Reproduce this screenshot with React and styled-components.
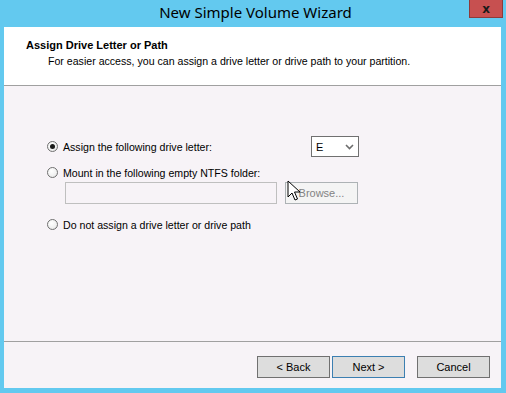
import React, { useState } from 'react'
import styled, { createGlobalStyle } from 'styled-components'

const GlobalStyle = createGlobalStyle`
  html, body { margin: 0; padding: 0; }
  body {
    width: 506px;
    height: 393px;
    overflow: hidden;
    font-family: 'Liberation Sans', Arial, sans-serif;
    font-size: 11px;
    color: #000;
  }
`

const Window = styled.div`
  width: 506px;
  height: 393px;
  box-sizing: border-box;
  background: #63c9ef;
  padding: 0 5px 5px 4px;
  display: flex;
  flex-direction: column;
  position: relative;
`

const TitleBar = styled.div`
  height: 27px;
  display: grid;
  grid-template-columns: 1fr auto 1fr;
  align-items: start;
`

const Title = styled.div`
  grid-column: 2;
  font-family: 'Noto Sans', 'Open Sans', sans-serif;
  font-size: 15px;
  line-height: 24px;
  color: #000;
  padding-left: 6px;
`

const CloseButton = styled.div`
  grid-column: 3;
  justify-self: end;
  margin-right: -2px;
  width: 34px;
  height: 18px;
  box-sizing: border-box;
  background: #c75050;
  border: 1px solid #8e3a3a;
  border-top: none;
  display: flex;
  align-items: center;
  justify-content: center;
  font-family: 'DejaVu Sans', sans-serif;
  font-weight: bold;
  font-size: 12px;
  color: #1a1a1a;
`

const Client = styled.div`
  flex: 1;
  display: flex;
  flex-direction: column;
  background: #f7f3f7;
`

const Header = styled.div`
  height: 59px;
  background: #fff;
  border-bottom: 1px solid #a0a0a0;
  box-sizing: border-box;
  padding: 12px 0 0 22px;
`

const HeaderTitle = styled.div`
  font-weight: bold;
  font-size: 11px;
  line-height: 13px;
`

const HeaderSub = styled.div`
  padding-left: 22px;
  margin-top: 3px;
  font-size: 10.6px;
  line-height: 13px;
`

const Body = styled.div`
  flex: 1;
  padding: 54px 0 0 43px;
  display: flex;
  flex-direction: column;
`

const OptionRow = styled.label`
  display: flex;
  align-items: center;
  height: 13px;
  margin-top: ${p => p.$top || 0}px;
  margin-bottom: ${p => p.$gap || 0}px;
`

const Radio = styled.span`
  width: 11px;
  height: 11px;
  box-sizing: border-box;
  border-radius: 50%;
  border: 1px solid #707070;
  background: radial-gradient(circle at 40% 35%, #ffffff 0%, #f0f0f0 60%, #d8d8d8 100%);
  display: flex;
  align-items: center;
  justify-content: center;
  flex: none;

  &::after {
    content: '';
    width: 5px;
    height: 5px;
    border-radius: 50%;
    background: ${p => (p.$checked ? '#1a1a1a' : 'transparent')};
  }
`

const OptionText = styled.span`
  margin-left: 5px;
  width: ${p => p.$width || 'auto'};
  font-size: 10.6px;
`

const Select = styled.div`
  width: 48px;
  height: 21px;
  box-sizing: border-box;
  border: 1px solid #707070;
  background: #fff;
  display: flex;
  align-items: center;
  justify-content: space-between;
  padding: 0 4px 0 4px;
  font-size: 11px;
`

const PathRow = styled.div`
  display: flex;
  align-items: center;
  gap: 8px;
  margin: 3px 0 0 18px;
`

const PathInput = styled.div`
  width: 212px;
  height: 22px;
  box-sizing: border-box;
  border: 1px solid #bfbfbf;
  background: #f7f3f7;
`

const Button = styled.div`
  width: ${p => p.$w || 73}px;
  height: 22px;
  box-sizing: border-box;
  display: flex;
  align-items: center;
  justify-content: center;
  font-size: 11px;
  background: ${p => (p.$disabled ? '#f4f4f4' : '#dddddd')};
  border: 1px solid ${p => (p.$primary ? '#3c7fb1' : p.$disabled ? '#adb2b5' : '#707070')};
  color: ${p => (p.$disabled ? '#838383' : '#000')};
`

const Footer = styled.div`
  height: 47px;
  box-sizing: border-box;
  border-top: 1px solid #a0a0a0;
  display: flex;
  align-items: flex-start;
  padding: 14px 0 0 253px;
`

const FooterGap = styled.div`
  width: ${p => p.$w}px;
`

const Cursor = styled.svg`
  position: absolute;
  left: 287px;
  top: 180px;
`

const Chevron = () => (
  <svg width="9" height="6" viewBox="0 0 9 6">
    <path d="M1 1 L4.5 4.5 L8 1" fill="none" stroke="#6d6d6d" strokeWidth="1.6" />
  </svg>
)

export default function App() {
  const [choice, setChoice] = useState(0)

  return (
    <Window>
      <GlobalStyle />
      <TitleBar>
        <Title>New Simple Volume Wizard</Title>
        <CloseButton>x</CloseButton>
      </TitleBar>
      <Client>
        <Header>
          <HeaderTitle>Assign Drive Letter or Path</HeaderTitle>
          <HeaderSub>For easier access, you can assign a drive letter or drive path to your partition.</HeaderSub>
        </Header>
        <Body>
          <OptionRow $gap={13} onClick={() => setChoice(0)}>
            <Radio $checked={choice === 0} />
            <OptionText $width="248px">Assign the following drive letter:</OptionText>
            <Select>
              E
              <Chevron />
            </Select>
          </OptionRow>
          <OptionRow onClick={() => setChoice(1)}>
            <Radio $checked={choice === 1} />
            <OptionText>Mount in the following empty NTFS folder:</OptionText>
          </OptionRow>
          <PathRow>
            <PathInput />
            <Button $disabled $w={73}>Browse...</Button>
          </PathRow>
          <OptionRow $top={14} onClick={() => setChoice(2)}>
            <Radio $checked={choice === 2} />
            <OptionText>Do not assign a drive letter or drive path</OptionText>
          </OptionRow>
        </Body>
        <Footer>
          <Button>&lt; Back</Button>
          <FooterGap $w={2} />
          <Button $primary>Next &gt;</Button>
          <FooterGap $w={12} />
          <Button>Cancel</Button>
        </Footer>
      </Client>
      <Cursor width="14" height="22" viewBox="0 0 14 22">
        <path d="M1 1 L1 17 L5 13 L8 20 L10.5 19 L7.5 12 L13 12 Z" fill="#fff" stroke="#000" strokeWidth="1" />
      </Cursor>
    </Window>
  )
}
